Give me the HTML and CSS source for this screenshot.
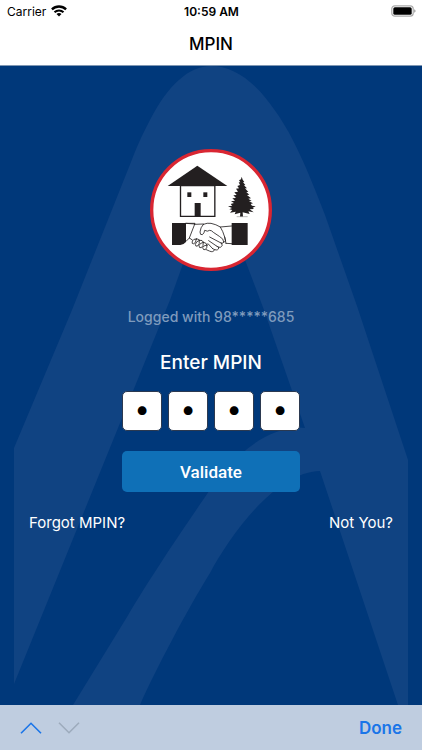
FILE: index.html
```html
<!DOCTYPE html>
<html lang="en">
<head>
    <meta charset="UTF-8">
    <meta name="viewport" content="width=device-width, initial-scale=1.0">
    <title>MPIN</title>
    <link rel="stylesheet" href="styles.css">
</head>
<body>
    <!-- Status bar -->
    <div class="status-bar">
        <div class="carrier">
            <span>Carrier</span>
            <svg class="wifi" viewBox="0 0 16 12" aria-hidden="true">
                <path d="M0.900 4.400a10.200 10.200 0 0 1 14.200 0" fill="none" stroke="#000" stroke-width="2.300"/>
                <path d="M3.500 7.300a6.400 6.400 0 0 1 9 0" fill="none" stroke="#000" stroke-width="2.100"/>
                <path d="M5.500 9.100a3.600 3.600 0 0 1 5 0L8 11.600z"/>
            </svg>
        </div>
        <span class="time">10:59 AM</span>
        <svg class="battery" viewBox="0 0 25 12" aria-hidden="true">
            <rect x="0.8" y="0.8" width="21.4" height="10.4" rx="3" fill="#fff" stroke="#aaa" stroke-width="1.2"/>
            <rect x="2.3" y="2.2" width="18.4" height="7.6" rx="1.6"/>
            <path d="M23.3 4.2c1.6.6 1.6 3 0 3.6z" fill="#888"/>
        </svg>
    </div>

    <header class="navbar">
        <h1>MPIN</h1>
    </header>

    <main class="content">
        <svg class="watermark" viewBox="0 0 422 639" preserveAspectRatio="none" aria-hidden="true">
            <path d="M211 0C189 0 168 19 150 54C141 71 136 83 131 96L72 244L14 382V618L170 234L211 120L242 186Q255 220 264 244L305 362C262 358 225 400 203 434C183 463 150 512 127 551L73 639H140C155 605 187 544 210 507C230 470 275 406 320 405L398 639H408V394L357 240L325 149C307 102 293 70 276 46C256 16 234 0 211 0Z"/>
        </svg>

        <form class="login">
            <svg class="logo" viewBox="30 27 366 366" role="img" aria-label="House, tree and handshake">
                <circle cx="213" cy="210" r="178" fill="#fff" stroke="#d92632" stroke-width="10"/>
                <g fill="#231f20">
                    <!-- house -->
                    <path d="M83 138L172 77L262 138z"/>
                    <rect x="142" y="157" width="12" height="14"/>
                    <rect x="190" y="157" width="12" height="14"/>
                    <rect x="164" y="189" width="18" height="40"/>
                    <path d="M121.500 137H224.500V229H121.500z" fill="none" stroke="#231f20" stroke-width="4"/>
                    <!-- tree -->
                    <path d="M305 110L308 119L313 126L309 127L316 135L312 136L321 145L315 145L325 156L319 156L328 164L321 165L333 175L325 176L335 183L327 184L339 190L332 192L336 197L347 199L338 203L342 207L329 208L341 217L325 214L329 222L308 217L309 230H300L301 218L284 223L287 215L270 218L277 210L268 208L276 204L264 199L277 197L272 192L282 189L273 184L285 182L277 175L288 174L280 166L290 165L283 157L294 155L288 146L297 145L292 138L300 135L296 127L301 127L297 121L303 118z"/>
                    <path d="M290 230H323" stroke="#999" stroke-width="2"/>
                    <!-- cuffs -->
                    <path d="M96 249H138V306Q130 315 121 315H96z"/>
                    <path d="M275 249H323V315H275z"/>
                </g>
                <!-- handshake -->
                <g fill="none" stroke="#231f20" stroke-width="2.500" stroke-linejoin="round" stroke-linecap="round">
                    <path d="M138 250H165L148 294L138 304"/>
                    <path d="M163 253L190 252M138 250L164 252"/>
                    <path d="M148 294L157 300"/>
                    <path d="M275 258L241 261M275 311L258 310"/>
                    <path d="M190 253Q202 248 213 250Q228 253 241 261Q249 274 254 291L258 310"/>
                    <path d="M190 253Q181 263 180 276Q180 286 187 284Q193 280 194 271Q203 276 209 271Q215 271 220 277L238 289Q252 297 251 306Q250 312 243 309"/>
                    <path d="M245 310Q251 318 241 322Q237 323 231 319"/>
                    <path d="M235 321Q239 329 229 330Q224 330 218 326"/>
                    <path d="M224 329Q220 339 208 333L199 329"/>
                    <path d="M209 291L243 309M206 302L231 319M204 311L218 326"/>
                    <path d="M254 291L257 303L251 307"/>
                    <path d="M169 297Q160 296 157 303Q154 312 161 312Q168 308 169 297z"/>
                    <path d="M178 301Q168 304 166 313Q166 321 173 318Q180 313 178 301z"/>
                    <path d="M190 307Q179 309 177 317Q177 325 184 323Q191 319 190 307z"/>
                    <path d="M201 315Q190 316 188 323Q189 331 196 329Q202 324 201 315z"/>
                    <path d="M169 297Q176 295 178 301Q188 299 190 307Q199 307 201 315"/>
                </g>
            </svg>

            <p class="logged">Logged with 98*****685</p>

            <h2 class="pin-title" id="pin-title">Enter MPIN</h2>
            <div class="pins" role="group" aria-labelledby="pin-title">
                <input type="password" inputmode="numeric" maxlength="1" value="1" aria-label="Digit 1">
                <input type="password" inputmode="numeric" maxlength="1" value="1" aria-label="Digit 2">
                <input type="password" inputmode="numeric" maxlength="1" value="1" aria-label="Digit 3">
                <input type="password" inputmode="numeric" maxlength="1" value="1" aria-label="Digit 4">
            </div>

            <button type="button" class="validate-btn">Validate</button>

            <div class="links">
                <a href="#">Forgot MPIN?</a>
                <a href="#">Not You?</a>
            </div>
        </form>
    </main>

    <!-- Keyboard toolbar -->
    <footer class="toolbar">
        <div class="arrows">
            <button type="button" aria-label="Previous field">
                <svg viewBox="0 0 22 12" aria-hidden="true"><path d="M1 11.300L11 1.300L21 11.300"/></svg>
            </button>
            <button type="button" aria-label="Next field" disabled>
                <svg viewBox="0 0 22 12" aria-hidden="true"><path d="M1 0.700L11 10.700L21 0.700"/></svg>
            </button>
        </div>
        <button type="button" class="done-btn">Done</button>
    </footer>
</body>
</html>
```
FILE: styles.css
```css
* {
    box-sizing: border-box;
}

body {
    font-family: Inter, Roboto, sans-serif;
    margin: 0;
    min-height: 100vh;
    display: flex;
    flex-direction: column;
    background: #fff;
    color: #000;
}

button {
    font-family: inherit;
    border: none;
    padding: 0;
    cursor: pointer;
}

/* Status bar */
.status-bar {
    display: grid;
    grid-template-columns: 1fr auto 1fr;
    align-items: center;
    height: 22px;
    padding: 0 6px 0 7px;
    font-size: 12px;
}

.carrier {
    display: flex;
    align-items: center;
    gap: 5px;
}

.wifi {
    width: 16px;
    height: 12px;
}

.time {
    font-weight: 600;
}

.battery {
    width: 25px;
    height: 12px;
    justify-self: end;
}

/* Navbar */
.navbar {
    display: flex;
    justify-content: center;
    align-items: center;
    height: 44px;
    border-bottom: 1px solid #7f97b3;
}

.navbar h1 {
    margin: 0;
    font-size: 17px;
    font-weight: 500;
}

/* Content */
.content {
    position: relative;
    flex: 1;
    background: #00387a;
    color: #fff;
}

.watermark {
    position: absolute;
    inset: 0;
    width: 100%;
    height: 100%;
    fill: #104382;
}

.login {
    position: relative;
    display: flex;
    flex-direction: column;
    align-items: center;
    padding: 83px 29px 24px;
}

.logo {
    width: 122px;
    height: 122px;
}

.logged {
    margin: 36px 0 0;
    font-size: 14px;
    line-height: 20px;
    font-weight: 500;
    color: #7f9bbd;
}

.pin-title {
    margin: 24px 0 16px;
    font-size: 19px;
    line-height: 24px;
    font-weight: 500;
}

.pins {
    display: flex;
    gap: 6px;
}

.pins input {
    width: 40px;
    height: 40px;
    padding: 0 0 4px;
    border: 1px solid #2b3950;
    border-radius: 5px;
    background: #fff;
    color: #000;
    font-family: Inter, sans-serif;
    font-size: 28px;
    text-align: center;
}

.validate-btn {
    width: 178px;
    height: 41px;
    margin-top: 20px;
    border-radius: 5px;
    background: #0f70b7;
    color: #fff;
    font-family: Roboto, sans-serif;
    font-size: 17px;
    font-weight: 500;
}

.links {
    display: flex;
    justify-content: space-between;
    align-self: stretch;
    margin-top: 21px;
}

.links a {
    color: #fff;
    font-size: 15px;
    line-height: 20px;
    text-decoration: none;
}

/* Keyboard toolbar */
.toolbar {
    display: flex;
    justify-content: space-between;
    align-items: center;
    height: 45px;
    padding: 0 20px;
    background: #bfcde0;
}

.arrows {
    display: flex;
    gap: 16px;
}

.arrows button {
    display: flex;
    background: none;
    color: #1a75e8;
}

.arrows button:disabled {
    color: #9dabbc;
}

.arrows svg {
    width: 22px;
    height: 12px;
    fill: none;
    stroke: currentColor;
    stroke-width: 1.6;
}

.done-btn {
    background: none;
    color: #1a75e8;
    font-size: 17px;
    font-weight: 600;
}
```
